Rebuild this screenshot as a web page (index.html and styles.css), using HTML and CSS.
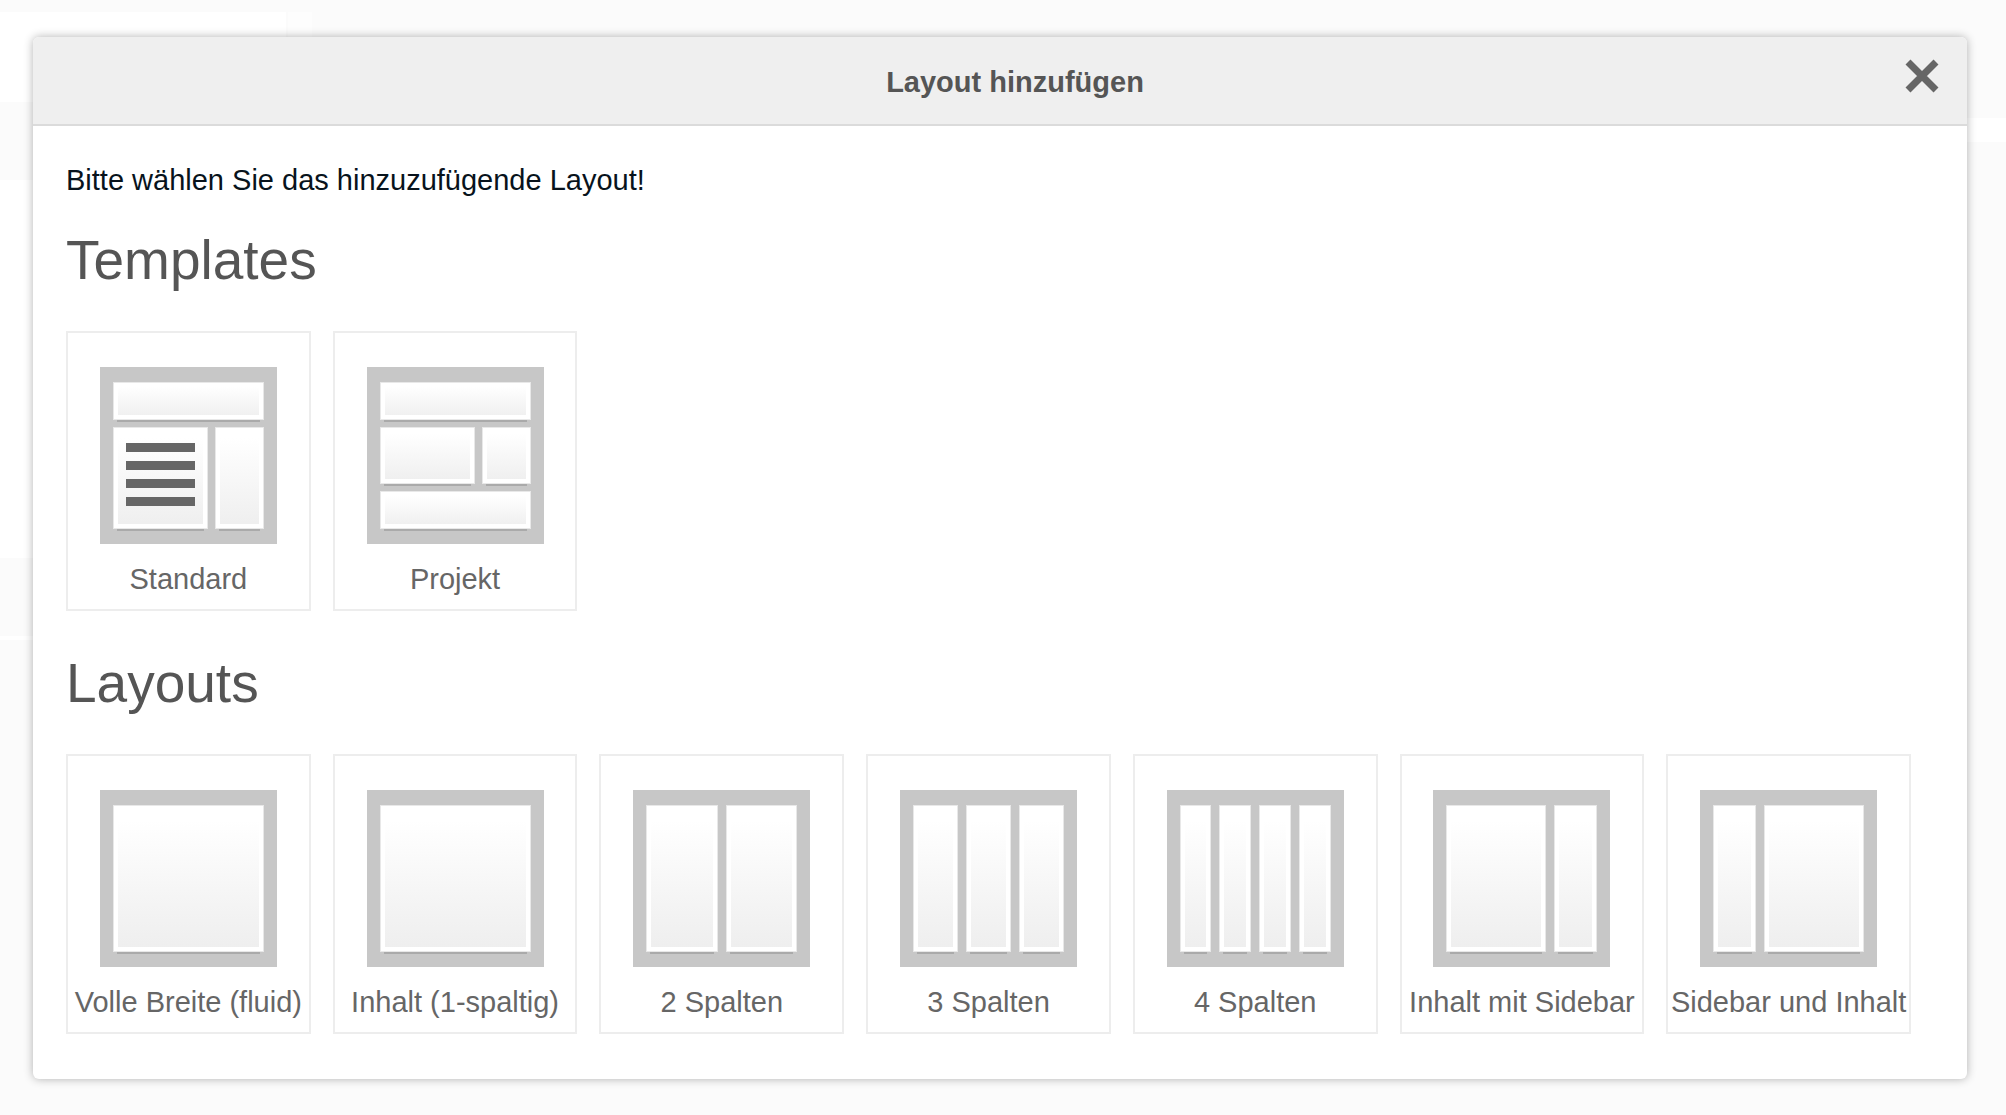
FILE: index.html
```html
<!DOCTYPE html>
<html lang="de">
<head>
<meta charset="utf-8">
<meta name="viewport" content="width=device-width, initial-scale=1">
<title>Layout hinzufügen</title>
<link rel="stylesheet" href="styles.css">
</head>
<body>
<main class="dialog" role="dialog" aria-labelledby="dialog-title">
  <header class="dialog-header">
    <h1 class="dialog-title" id="dialog-title">Layout hinzufügen</h1>
    <button class="close" type="button" aria-label="Schließen">
      <svg class="close-icon" viewBox="0 0 36 36" aria-hidden="true"><path d="M4 4 32 32M32 4 4 32"/></svg>
    </button>
  </header>
  <div class="dialog-body">
    <p class="intro">Bitte wählen Sie das hinzuzufügende Layout!</p>

    <section>
      <h2 class="group-title">Templates</h2>
      <div class="cards">
        <button class="card" type="button">
          <span class="preview preview-standard">
            <span class="pane pane-full"></span>
            <span class="pane pane-text"><i class="line"></i><i class="line"></i><i class="line"></i><i class="line"></i></span>
            <span class="pane"></span>
          </span>
          <span class="label">Standard</span>
        </button>
        <button class="card" type="button">
          <span class="preview preview-project">
            <span class="pane pane-full"></span>
            <span class="pane"></span>
            <span class="pane"></span>
            <span class="pane pane-full"></span>
          </span>
          <span class="label">Projekt</span>
        </button>
      </div>
    </section>

    <section>
      <h2 class="group-title">Layouts</h2>
      <div class="cards">
        <button class="card" type="button">
          <span class="preview"><span class="pane"></span></span>
          <span class="label">Volle Breite (fluid)</span>
        </button>
        <button class="card" type="button">
          <span class="preview"><span class="pane"></span></span>
          <span class="label">Inhalt (1-spaltig)</span>
        </button>
        <button class="card" type="button">
          <span class="preview cols-2"><span class="pane"></span><span class="pane"></span></span>
          <span class="label">2 Spalten</span>
        </button>
        <button class="card" type="button">
          <span class="preview cols-3"><span class="pane"></span><span class="pane"></span><span class="pane"></span></span>
          <span class="label">3 Spalten</span>
        </button>
        <button class="card" type="button">
          <span class="preview cols-4"><span class="pane"></span><span class="pane"></span><span class="pane"></span><span class="pane"></span></span>
          <span class="label">4 Spalten</span>
        </button>
        <button class="card" type="button">
          <span class="preview sidebar-right"><span class="pane"></span><span class="pane"></span></span>
          <span class="label">Inhalt mit Sidebar</span>
        </button>
        <button class="card" type="button">
          <span class="preview sidebar-left"><span class="pane"></span><span class="pane"></span></span>
          <span class="label">Sidebar und Inhalt</span>
        </button>
      </div>
    </section>
  </div>
</main>
</body>
</html>
```
FILE: styles.css
```css
* {
  box-sizing: border-box;
}

body {
  margin: 0;
  min-height: 100vh;
  padding: 37px 39px 36px 33px;
  font-family: Arial, "Liberation Sans", sans-serif;
  font-size: 29px;
  line-height: 34px;
  color: #666;
  /* faded page behind the dialog */
  background:
    linear-gradient(#fff, #fff) 0 12px / 286px 90px no-repeat,
    linear-gradient(#fdfdfd, #fdfdfd) 288px 12px / 24px 90px no-repeat,
    linear-gradient(#fff, #fff) 0 180px / 50% 378px no-repeat,
    linear-gradient(#fff, #fff) 0 636px / 50% 4px no-repeat,
    linear-gradient(#fff, #fff) 100% 118px / 50% 24px no-repeat,
    #fbfbfb;
}

.dialog {
  background: #fff;
  border-radius: 6px;
  box-shadow: 0 0 10px rgba(0, 0, 0, 0.3);
}

.dialog-header {
  display: grid;
  grid-template-columns: 1fr auto 1fr;
  align-items: center;
  padding: 2px 27px 0 57px;
  height: 89px;
  background: #efefef;
  border-bottom: 2px solid #dbdbdb;
  border-radius: 6px 6px 0 0;
}

.dialog-title {
  grid-column: 2;
  margin: 0;
  font-size: 29px;
  color: #555;
}

.close {
  justify-self: end;
  margin: 0 0 12px;
  padding: 0;
  border: 0;
  background: none;
  line-height: 0;
  cursor: pointer;
}

.close-icon {
  width: 36px;
  height: 36px;
  fill: none;
  stroke: #666;
  stroke-width: 7;
}

.dialog-body {
  padding: 37px 56px 45px 33px;
}

.intro {
  margin: 0 0 32px;
  color: #08131c;
}

.group-title {
  margin: 0 0 40px;
  font-size: 55px;
  line-height: 62px;
  font-weight: 400;
  color: #555;
}

.cards {
  display: grid;
  grid-template-columns: repeat(7, 1fr);
  gap: 22px;
}

section + section {
  margin-top: 41px;
}

.card {
  display: flex;
  flex-direction: column;
  align-items: center;
  min-width: 0;
  margin: 0;
  padding: 34px 0 13px;
  border: 2px solid #ededed;
  background: #fff;
  font: inherit;
  color: inherit;
  cursor: pointer;
}

.label {
  margin-top: 18px;
  white-space: nowrap;
}

/* miniature page: grey frame with light panes */
.preview {
  display: grid;
  gap: 8px;
  width: 177px;
  height: 177px;
  padding: 15px 13px;
  background: #c7c7c7;
}

.preview-standard {
  grid-template: 38px 1fr / 95px 1fr;
  gap: 7px;
}

.preview-project {
  grid-template: 38px 1fr 38px / 95px 1fr;
  gap: 7px;
}

.cols-2 {
  grid-template-columns: repeat(2, 1fr);
}

.cols-3 {
  grid-template-columns: repeat(3, 1fr);
}

.cols-4 {
  grid-template-columns: repeat(4, 1fr);
}

.sidebar-right {
  grid-template-columns: 1fr 43px;
}

.sidebar-left {
  grid-template-columns: 43px 1fr;
}

.pane {
  border: 1px solid #e8e8e8;
  background: linear-gradient(#fff 10%, #eee);
  box-shadow: inset 0 0 0 4px #fff, 0 6px 0 -4px #aaa;
}

.pane-full {
  grid-column: 1 / -1;
}

.pane-text {
  display: flex;
  flex-direction: column;
  gap: 9px;
  padding: 15px 12px;
}

.line {
  height: 9px;
  background: #666;
}
```
